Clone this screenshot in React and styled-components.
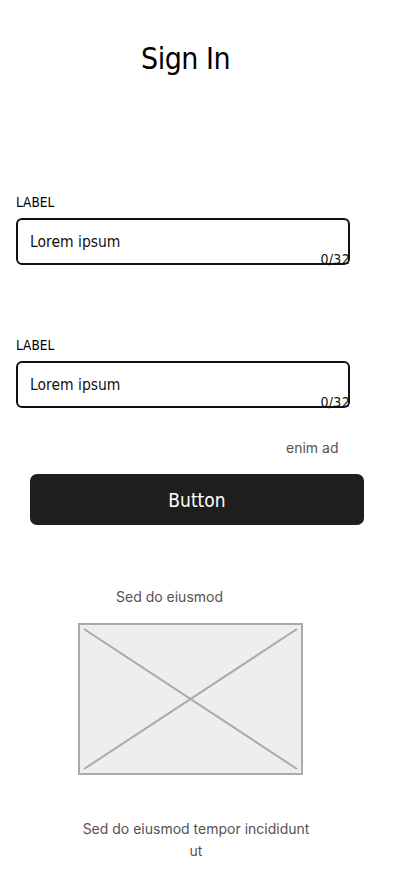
import React from 'react';
import styled, { createGlobalStyle } from 'styled-components';

const GlobalStyle = createGlobalStyle`
  body {
    margin: 0;
    background: #ffffff;
    font-family: Inter, 'Liberation Sans', sans-serif;
  }
`;

const hand = `'DejaVu Sans', 'Liberation Sans', sans-serif`;

const Page = styled.div`
  width: 402px;
  min-height: 874px;
  display: flex;
  flex-direction: column;
  box-sizing: border-box;
  padding-top: 38px;
`;

const Title = styled.h1`
  margin: 0 0 0 141px;
  font-family: ${hand};
  font-stretch: condensed;
  font-weight: 400;
  font-size: 30px;
  line-height: 42px;
  color: #000;
  letter-spacing: -0.5px;
`;

const Field = styled.div`
  display: flex;
  flex-direction: column;
  margin: ${(p) => p.$top}px 0 0 16px;
  width: 334px;
`;

const Label = styled.div`
  font-family: ${hand};
  font-stretch: condensed;
  font-size: 13.5px;
  line-height: 16px;
  color: #000;
  margin-bottom: 8px;
`;

const InputBox = styled.div`
  position: relative;
  height: 47px;
  box-sizing: border-box;
  border: 2px solid #111;
  border-radius: 6px;
  display: flex;
  align-items: center;
  padding: 0 12px;
`;

const InputText = styled.span`
  font-family: ${hand};
  font-stretch: condensed;
  font-size: 15.5px;
  color: #111;
`;

const Counter = styled.span`
  position: absolute;
  right: -2px;
  bottom: -4px;
  font-family: ${hand};
  font-stretch: condensed;
  font-size: 14px;
  letter-spacing: 0.3px;
  color: #111;
`;

const HelperLink = styled.div`
  margin: 31px 0 0 286px;
  font-size: 14px;
  line-height: 17px;
  color: #595050;
`;

const Button = styled.button`
  margin: 18px 0 0 30px;
  width: 334px;
  height: 51px;
  border: none;
  border-radius: 7px;
  background: #1e1e1e;
  color: #fff;
  font-family: ${hand};
  font-stretch: condensed;
  font-size: 19px;
  display: flex;
  align-items: center;
  justify-content: center;
`;

const Caption = styled.div`
  margin: ${(p) => p.$top}px 0 0 ${(p) => p.$left}px;
  width: ${(p) => p.$width}px;
  font-size: 14px;
  line-height: 22px;
  color: #595050;
  text-align: ${(p) => p.$align || 'left'};
`;

const Placeholder = styled.div`
  margin: 15px 0 0 78px;
  width: 225px;
  height: 152px;
  box-sizing: border-box;
  border: 2px solid #aaaaaa;
  background: #eeeeee;
  svg {
    display: block;
    width: 100%;
    height: 100%;
  }
`;

const TextField = ({ top, value }) => (
  <Field $top={top}>
    <Label>LABEL</Label>
    <InputBox>
      <InputText>{value}</InputText>
      <Counter>0/32</Counter>
    </InputBox>
  </Field>
);

export default function App() {
  return (
    <Page>
      <GlobalStyle />
      <Title>Sign In</Title>
      <TextField top={114} value="Lorem ipsum" />
      <TextField top={72} value="Lorem ipsum" />
      <HelperLink>enim ad</HelperLink>
      <Button>Button</Button>
      <Caption $top={61} $left={116} $width={200}>Sed do eiusmod</Caption>
      <Placeholder>
        <svg viewBox="0 0 221 148" preserveAspectRatio="none">
          <line x1="4" y1="4" x2="217" y2="144" stroke="#aaaaaa" strokeWidth="2" />
          <line x1="217" y1="4" x2="4" y2="144" stroke="#aaaaaa" strokeWidth="2" />
        </svg>
      </Placeholder>
      <Caption $top={43} $left={80} $width={232} $align="center">
        Sed do eiusmod tempor incididunt ut
      </Caption>
    </Page>
  );
}
